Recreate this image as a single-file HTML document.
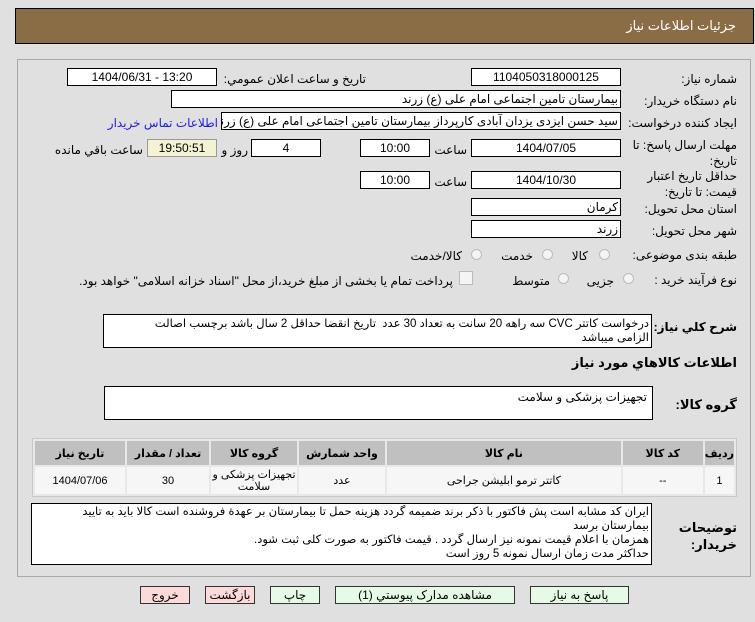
<!DOCTYPE html>
<html><head><meta charset="utf-8">
<style>
body{margin:0;width:755px;height:622px;background:#e0e0e0;font-family:"Liberation Sans","DejaVu Sans",sans-serif;font-size:12px;color:#000;position:relative;overflow:hidden}
.a{position:absolute}
.hdr{left:15px;top:8px;width:737px;height:34px;background:#8b6d45;border:1px solid #000}
.hdr span{position:absolute;right:17px;top:9px;color:#fff;font-size:13px}
.panel{left:17px;top:59px;width:732px;height:516px;border:1px solid #a8a8a8}
.box{position:absolute;background:#fff;border:1px solid #000;box-sizing:border-box;height:18px;line-height:16px;text-align:center;white-space:nowrap;overflow:hidden}
.r{text-align:right;padding-right:2px;direction:rtl}
.lbl{position:absolute;direction:rtl;text-align:right;white-space:nowrap}
.rad{position:absolute;width:11px;height:11px;border-radius:50%;border:1px solid #bbb;background:#f4f4f4;box-sizing:border-box}
.btn{position:absolute;top:586px;height:18px;box-sizing:border-box;border:1px solid #333;text-align:center;line-height:16px;direction:rtl}
.g{background:#e6fbe6}.p{background:#fcdada}
table{border-collapse:separate;border-spacing:2px;position:absolute;left:32px;top:438px;width:705px;background:#e8e8e8;border:1px solid #c8c8c8}
th{background:#c0c0c0;height:24px;padding:0;font-weight:bold;font-size:11px;direction:rtl}
td{background:#f6f6f6;height:27px;padding:0;text-align:center;direction:rtl;font-size:11px;line-height:12px}
</style></head><body>
<div class="a hdr"><span>جزئیات اطلاعات نیاز</span></div>
<div class="a panel"></div>

<div class="lbl" style="right:18px;top:72px">شماره نیاز:</div>
<div class="box" style="left:471px;top:68px;width:150px">1104050318000125</div>
<div class="lbl" style="right:389px;top:72px">تاریخ و ساعت اعلان عمومي:</div>
<div class="box" style="left:67px;top:68px;width:150px">1404/06/31 - 13:20</div>

<div class="lbl" style="right:18px;top:94px">نام دستگاه خریدار:</div>
<div class="box r" style="left:171px;top:90px;width:450px">بیمارستان تامین اجتماعی امام علی (ع) زرند</div>

<div class="lbl" style="right:18px;top:116px">ایجاد کننده درخواست:</div>
<div class="box r" style="left:221px;top:112px;width:400px">سید حسن ایزدی یزدان آبادی کارپرداز بیمارستان تامین اجتماعی امام علی (ع) زرند</div>
<div class="lbl" style="right:537px;top:116px;color:#2020e0">اطلاعات تماس خریدار</div>

<div class="lbl" style="right:18px;top:137px;line-height:16px">مهلت ارسال پاسخ: تا<br>تاریخ:</div>
<div class="box" style="left:471px;top:139px;width:150px">1404/07/05</div>
<div class="lbl" style="right:288px;top:143px">ساعت</div>
<div class="box" style="left:360px;top:139px;width:70px">10:00</div>
<div class="box" style="left:251px;top:139px;width:70px">4</div>
<div class="lbl" style="right:507px;top:143px">روز و</div>
<div class="box" style="left:147px;top:139px;width:70px;background:#f3f3d3;border-color:#999">19:50:51</div>
<div class="lbl" style="right:612px;top:143px">ساعت باقي مانده</div>

<div class="lbl" style="right:18px;top:168px;line-height:16px">حداقل تاریخ اعتبار<br>قیمت: تا تاریخ:</div>
<div class="box" style="left:471px;top:171px;width:150px">1404/10/30</div>
<div class="lbl" style="right:288px;top:175px">ساعت</div>
<div class="box" style="left:360px;top:171px;width:70px">10:00</div>

<div class="lbl" style="right:18px;top:202px">استان محل تحویل:</div>
<div class="box r" style="left:471px;top:198px;width:150px">کرمان</div>
<div class="lbl" style="right:18px;top:224px">شهر محل تحویل:</div>
<div class="box r" style="left:471px;top:220px;width:150px">زرند</div>

<div class="lbl" style="right:18px;top:248px">طبقه بندی موضوعی:</div>
<div class="rad" style="left:599px;top:249px"></div><div class="lbl" style="right:167px;top:249px">کالا</div>
<div class="rad" style="left:542px;top:249px"></div><div class="lbl" style="right:222px;top:249px">خدمت</div>
<div class="rad" style="left:471px;top:249px"></div><div class="lbl" style="right:293px;top:249px">کالا/خدمت</div>

<div class="lbl" style="right:18px;top:273px">نوع فرآیند خرید :</div>
<div class="rad" style="left:623px;top:273px"></div><div class="lbl" style="right:141px;top:274px">جزیی</div>
<div class="rad" style="left:558px;top:273px"></div><div class="lbl" style="right:205px;top:274px">متوسط</div>
<div class="a" style="left:459px;top:271px;width:12px;height:12px;border:1px solid #bbb;background:#f4f4f4"></div>
<div class="lbl" style="right:302px;top:274px">پرداخت تمام یا بخشی از مبلغ خرید،از محل "اسناد خزانه اسلامی" خواهد بود.</div>

<div class="lbl" style="right:18px;top:320px;font-weight:bold;font-size:12px">شرح کلي نیاز:</div>
<div class="box r" style="left:103px;top:314px;width:549px;height:34px;white-space:normal;text-align:right;line-height:14px;padding:2px 2px 0 22px;font-size:11.5px">درخواست کاتتر CVC سه راهه 20 سانت به تعداد 30 عدد &nbsp;تاریخ انقضا حداقل 2 سال باشد برچسب اصالت الزامی میباشد</div>

<div class="lbl" style="right:18px;top:355px;font-weight:bold;font-size:13px">اطلاعات کالاهاي مورد نیاز</div>

<div class="lbl" style="right:18px;top:397px;font-weight:bold;font-size:13px">گروه کالا:</div>
<div class="box r" style="left:104px;top:386px;width:549px;height:34px;text-align:right;line-height:15px;padding:3px 5px 0 0">تجهیزات پزشکی و سلامت</div>

<table dir="rtl">
<tr><th style="width:26px">ردیف</th><th style="width:80px">کد کالا</th><th>نام کالا</th><th style="width:86px">واحد شمارش</th><th style="width:86px">گروه کالا</th><th style="width:82px">تعداد / مقدار</th><th style="width:90px">تاریخ نیاز</th></tr>
<tr><td>1</td><td>--</td><td>کاتتر ترمو ابلیشن جراحی</td><td>عدد</td><td>تجهیزات پزشکی و سلامت</td><td>30</td><td>1404/07/06</td></tr>
</table>

<div class="lbl" style="right:18px;top:519px;font-weight:bold;line-height:17px;font-size:13px">توضیحات<br>خریدار:</div>
<div class="box r" style="left:31px;top:503px;width:621px;height:62px;white-space:normal;text-align:right;line-height:14px;padding:1px 2px 0 18px;font-size:11.5px">ایران کد مشابه است پش فاکتور با ذکر برند ضمیمه گردد هزینه حمل تا بیمارستان بر عهدة فروشنده است کالا باید به تایید بیمارستان برسد<br>همزمان با اعلام قیمت نمونه نیز ارسال گردد . قیمت فاکتور به صورت کلی ثبت شود.<br>حداکثر مدت زمان ارسال نمونه 5 روز است</div>

<div class="btn p" style="left:140px;width:50px">خروج</div>
<div class="btn p" style="left:205px;width:50px">بازگشت</div>
<div class="btn g" style="left:270px;width:50px">چاپ</div>
<div class="btn g" style="left:335px;width:180px">مشاهده مدارک پیوستي (1)</div>
<div class="btn g" style="left:530px;width:99px">پاسخ به نیاز</div>
</body></html>
